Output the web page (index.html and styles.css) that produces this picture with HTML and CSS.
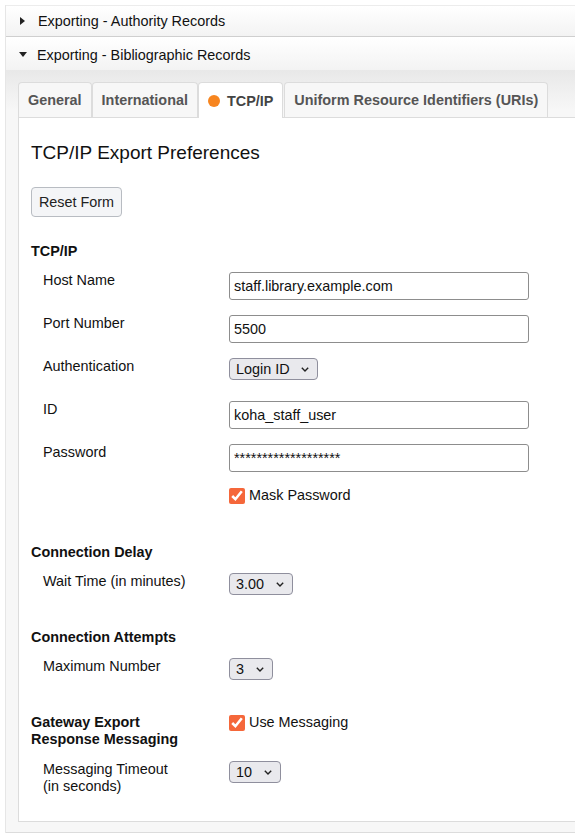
FILE: index.html
```html
<!DOCTYPE html>
<html lang="en">
<head>
<meta charset="utf-8">
<title>Exporting preferences</title>
<link rel="stylesheet" href="styles.css">
</head>
<body>
<div class="accordion">
  <div class="acc-header collapsed"><span class="tri tri-right"></span>Exporting - Authority Records</div>
  <div class="acc-header expanded"><span class="tri tri-down"></span>Exporting - Bibliographic Records</div>
  <div class="acc-body">
    <div class="tabs">
      <div class="tab">General</div>
      <div class="tab">International</div>
      <div class="tab active"><span class="dot"></span>TCP/IP</div>
      <div class="tab">Uniform Resource Identifiers (URIs)</div>
    </div>
    <div class="panel">
      <h2 class="title">TCP/IP Export Preferences</h2>
      <button class="btn" type="button">Reset Form</button>

      <div class="group first">
        <div class="group-title">TCP/IP</div>
        <div class="row">
          <label class="lbl">Host Name</label>
          <input class="txt" type="text" value="staff.library.example.com">
        </div>
        <div class="row">
          <label class="lbl">Port Number</label>
          <input class="txt" type="text" value="5500">
        </div>
        <div class="row">
          <label class="lbl">Authentication</label>
          <span class="sel"><select><option>Login ID</option></select><svg class="chev" width="8" height="5" viewBox="0 0 8 5"><path d="M0.8 0.8 L4 4 L7.2 0.8" fill="none" stroke="#222" stroke-width="1.4"/></svg></span>
        </div>
        <div class="row">
          <label class="lbl">ID</label>
          <input class="txt" type="text" value="koha_staff_user">
        </div>
        <div class="row">
          <label class="lbl">Password</label>
          <input class="txt" type="text" value="*******************">
        </div>
        <div class="row">
          <span class="lbl"></span>
          <label class="chk"><input type="checkbox" checked>Mask Password</label>
        </div>
      </div>

      <div class="group">
        <div class="group-title">Connection Delay</div>
        <div class="row">
          <label class="lbl">Wait Time (in minutes)</label>
          <span class="sel"><select><option>3.00</option></select><svg class="chev" width="8" height="5" viewBox="0 0 8 5"><path d="M0.8 0.8 L4 4 L7.2 0.8" fill="none" stroke="#222" stroke-width="1.4"/></svg></span>
        </div>
      </div>

      <div class="group">
        <div class="group-title">Connection Attempts</div>
        <div class="row">
          <label class="lbl">Maximum Number</label>
          <span class="sel"><select><option>3</option></select><svg class="chev" width="8" height="5" viewBox="0 0 8 5"><path d="M0.8 0.8 L4 4 L7.2 0.8" fill="none" stroke="#222" stroke-width="1.4"/></svg></span>
        </div>
      </div>

      <div class="group last">
        <div class="row">
          <span class="lbl strong">Gateway Export<br>Response Messaging</span>
          <label class="chk"><input type="checkbox" checked>Use Messaging</label>
        </div>
        <div class="row">
          <label class="lbl">Messaging Timeout<br>(in seconds)</label>
          <span class="sel"><select><option>10</option></select><svg class="chev" width="8" height="5" viewBox="0 0 8 5"><path d="M0.8 0.8 L4 4 L7.2 0.8" fill="none" stroke="#222" stroke-width="1.4"/></svg></span>
        </div>
      </div>
    </div>
  </div>
</div>
</body>
</html>
```
FILE: styles.css
```css
html, body {
  margin: 0;
  padding: 0;
  background: #fff;
  overflow: hidden;
}
body {
  font-family: "Liberation Sans", Arial, sans-serif;
  font-size: 14.4px;
  color: #111;
}
.accordion {
  margin: 5px 0 0 5px;
  width: 640px;
  border-left: 1px solid #e6e6e6;
}
.acc-header {
  height: 32px;
  display: flex;
  align-items: center;
  padding-left: 13px;
  background: linear-gradient(#ffffff, #f3f3f3);
  border-top: 1px solid #ececec;
  border-bottom: 1px solid #cfcfcf;
  font-size: 14.4px;
  color: #111;
  box-sizing: border-box;
}
.acc-header.expanded {
  border-top: none;
  border-bottom: none;
  height: 33px;
  padding-top: 2px;
}
.tri {
  width: 0;
  height: 0;
  display: inline-block;
}
.tri-right {
  border-top: 4px solid transparent;
  border-bottom: 4px solid transparent;
  border-left: 5px solid #222;
  margin-left: 1px;
  margin-right: 13px;
}
.tri-down {
  border-left: 4px solid transparent;
  border-right: 4px solid transparent;
  border-top: 5px solid #222;
  margin-right: 10px;
}
.acc-body {
  background: linear-gradient(#e8e8e8 0px, #f7f7f7 40px, #f7f7f7 100%);
  padding: 12px 0 10px 12px;
  border-bottom: 1px solid #dcdcdc;
}
.tabs {
  display: flex;
  align-items: flex-end;
}
.tab {
  height: 35px;
  box-sizing: border-box;
  padding: 0 9px;
  display: flex;
  align-items: center;
  font-weight: bold;
  color: #555;
  background: #f7f7f7;
  border: 1px solid #dcdcdc;
  border-bottom: none;
  border-radius: 4px 4px 0 0;
}
.tab.active {
  background: #fff;
  color: #444;
  height: 36px;
  margin: 0 1px -1px 0;
  position: relative;
  z-index: 1;
}
.dot {
  width: 12px;
  height: 12px;
  border-radius: 50%;
  background: #f7851f;
  margin-right: 7px;
  display: inline-block;
}
.panel {
  background: #fff;
  border: 1px solid #dcdcdc;
  border-right: none;
  padding: 24px 12px 26px 12px;
}
.title {
  font-size: 19px;
  font-weight: normal;
  line-height: 22px;
  margin: 0 0 23px 0;
  color: #111;
}
.btn {
  font-family: "Liberation Sans", Arial, sans-serif;
  font-size: 14.4px;
  height: 30px;
  width: 91px;
  padding: 0;
  background: #f4f5f7;
  border: 1px solid #b8bcc2;
  border-radius: 4px;
  color: #222;
  margin: 0 0 26px 0;
  display: block;
}
.group {
  margin-bottom: 28px;
}
.group.first {
  margin-bottom: 29px;
}
.group.last {
  margin-bottom: 0;
}
.group-title {
  font-weight: bold;
  line-height: 17px;
  margin-bottom: 12px;
  color: #111;
}
.row {
  display: grid;
  grid-template-columns: 198px auto;
  align-items: start;
  justify-items: start;
  min-height: 28px;
  margin-bottom: 15px;
}
.row:last-child {
  margin-bottom: 0;
}
.group.last .row:first-child {
  margin-bottom: 13px;
}
.lbl {
  padding-left: 12px;
  line-height: 17px;
  color: #111;
}
.lbl.strong {
  padding-left: 0;
  font-weight: bold;
}
.txt {
  width: 300px;
  height: 28px;
  box-sizing: border-box;
  border: 1px solid #8d8d8d;
  border-radius: 3px;
  padding: 0 4px;
  font-family: "Liberation Sans", Arial, sans-serif;
  font-size: 14.4px;
  color: #111;
  margin: 0;
}
.sel {
  position: relative;
  display: inline-block;
}
.sel select {
  appearance: none;
  -webkit-appearance: none;
  height: 22px;
  box-sizing: border-box;
  background: #e9e9ed;
  border: 1px solid #8f8f9d;
  border-radius: 4px;
  padding: 0 27px 0 6px;
  font-family: "Liberation Sans", Arial, sans-serif;
  font-size: 14.4px;
  color: #111;
  margin: 0;
  display: block;
}
.chev {
  position: absolute;
  right: 9px;
  top: 9px;
  pointer-events: none;
}
.chk {
  display: flex;
  align-items: center;
  line-height: 17px;
  color: #111;
}
.chk input {
  width: 16px;
  height: 16px;
  margin: 1px 4px 0 0;
  accent-color: #f5673a;
}
```
